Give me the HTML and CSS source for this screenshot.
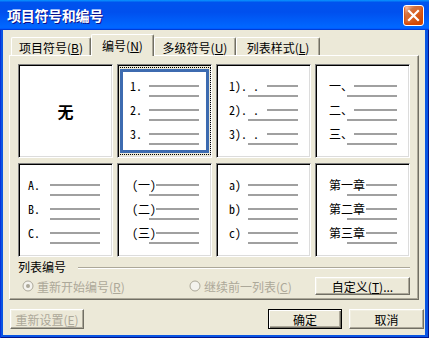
FILE: index.html
```html
<!DOCTYPE html>
<html lang="zh-CN">
<head>
    <meta charset="UTF-8">
    <title>项目符号和编号</title>
    <link rel="stylesheet" href="styles.css">
</head>
<body>
    <div class="window">
        <div class="titlebar">
            <span class="title">项目符号和编号</span>
            <button class="close" aria-label="关闭">
                <svg width="13" height="13" viewBox="0 0 13 13">
                    <path d="M2 2 L11 11 M11 2 L2 11" stroke="#fff" stroke-width="2.2" stroke-linecap="square"/>
                </svg>
            </button>
        </div>

        <div class="frame">
            <div class="dialog">
                <div class="tabs">
                    <div class="tab tab-1">项目符号(<u>B</u>)</div>
                    <div class="tab tab-2 active">编号(<u>N</u>)</div>
                    <div class="tab tab-3">多级符号(<u>U</u>)</div>
                    <div class="tab tab-4">列表样式(<u>L</u>)</div>
                </div>

                <div class="panel">
                    <div class="gallery">
                        <div class="opt opt-none">无</div>

                        <div class="opt selected o-num">
                            <div class="focus">
                                <div class="sel-in">
                                    <div class="item"><div class="head"><span class="lbl">1.</span><i class="bar"></i></div><i class="bar sub"></i></div>
                                    <div class="item"><div class="head"><span class="lbl">2.</span><i class="bar"></i></div><i class="bar sub"></i></div>
                                    <div class="item"><div class="head"><span class="lbl">3.</span><i class="bar"></i></div><i class="bar sub"></i></div>
                                </div>
                            </div>
                        </div>

                        <div class="opt o-paren-dot">
                            <div class="item"><div class="head"><span class="lbl">1). .</span><i class="bar"></i></div><i class="bar sub"></i></div>
                            <div class="item"><div class="head"><span class="lbl">2). .</span><i class="bar"></i></div><i class="bar sub"></i></div>
                            <div class="item"><div class="head"><span class="lbl">3). .</span><i class="bar"></i></div><i class="bar sub"></i></div>
                        </div>

                        <div class="opt o-cn">
                            <div class="item"><div class="head"><span class="lbl">一、</span><i class="bar"></i></div><i class="bar sub"></i></div>
                            <div class="item"><div class="head"><span class="lbl">二、</span><i class="bar"></i></div><i class="bar sub"></i></div>
                            <div class="item"><div class="head"><span class="lbl">三、</span><i class="bar"></i></div><i class="bar sub"></i></div>
                        </div>

                        <div class="opt o-alpha">
                            <div class="item"><div class="head"><span class="lbl">A.</span><i class="bar"></i></div><i class="bar sub"></i></div>
                            <div class="item"><div class="head"><span class="lbl">B.</span><i class="bar"></i></div><i class="bar sub"></i></div>
                            <div class="item"><div class="head"><span class="lbl">C.</span><i class="bar"></i></div><i class="bar sub"></i></div>
                        </div>

                        <div class="opt o-cnparen">
                            <div class="item"><div class="head"><span class="lbl">(一)</span><i class="bar"></i></div><i class="bar sub"></i></div>
                            <div class="item"><div class="head"><span class="lbl">(二)</span><i class="bar"></i></div><i class="bar sub"></i></div>
                            <div class="item"><div class="head"><span class="lbl">(三)</span><i class="bar"></i></div><i class="bar sub"></i></div>
                        </div>

                        <div class="opt o-lower">
                            <div class="item"><div class="head"><span class="lbl">a)</span><i class="bar"></i></div><i class="bar sub"></i></div>
                            <div class="item"><div class="head"><span class="lbl">b)</span><i class="bar"></i></div><i class="bar sub"></i></div>
                            <div class="item"><div class="head"><span class="lbl">c)</span><i class="bar"></i></div><i class="bar sub"></i></div>
                        </div>

                        <div class="opt o-chapter">
                            <div class="item"><div class="head"><span class="lbl">第一章</span><i class="bar"></i></div><i class="bar sub"></i></div>
                            <div class="item"><div class="head"><span class="lbl">第二章</span><i class="bar"></i></div><i class="bar sub"></i></div>
                            <div class="item"><div class="head"><span class="lbl">第三章</span><i class="bar"></i></div><i class="bar sub"></i></div>
                        </div>
                    </div>

                    <div class="group">
                        <span>列表编号</span>
                        <span class="rule"></span>
                    </div>

                    <div class="list-row">
                        <label class="radio radio-restart">
                            <svg width="12" height="12" viewBox="0 0 12 12">
                                <circle cx="6" cy="6" r="5" fill="#F4F3EE" stroke="#ACA899"/>
                                <circle cx="6" cy="6" r="2" fill="#ACA899"/>
                            </svg>
                            <span>重新开始编号(<u>R</u>)</span>
                        </label>
                        <label class="radio">
                            <svg width="12" height="12" viewBox="0 0 12 12">
                                <circle cx="6" cy="6" r="5" fill="#F4F3EE" stroke="#ACA899"/>
                            </svg>
                            <span>继续前一列表(<u>C</u>)</span>
                        </label>
                        <button class="btn btn-custom">自定义(<u>T</u>)...</button>
                    </div>
                </div>

                <div class="footer">
                    <button class="btn btn-reset" disabled>重新设置(<u>E</u>)</button>
                    <span class="spacer"></span>
                    <button class="btn btn-ok">确定</button>
                    <button class="btn btn-cancel">取消</button>
                </div>
            </div>
        </div>
    </div>
</body>
</html>
```

FILE: styles.css
```css
:root {
    --face: #ECE9D8;
    --light: #F1EFE2;
    --shadow: #ACA899;
    --dark: #716F64;
    --bar: #A0A0A0;
    --select: #3D6BB0;
}

* {
    box-sizing: border-box;
}

body {
    margin: 0;
    font-family: "Noto Sans CJK SC", "Liberation Sans", sans-serif;
    font-size: 12px;
    color: #000;
}

u {
    text-decoration: underline;
    text-underline-offset: 1px;
}

.window {
    width: 429px;
    height: 338px;
    display: flex;
    flex-direction: column;
}

/* XP style caption */
.titlebar {
    height: 30px;
    flex-shrink: 0;
    display: flex;
    align-items: center;
    justify-content: space-between;
    padding: 0 5px 0 7px;
    background: linear-gradient(180deg, #0997ff, #0053ee 8%, #0050ee 40%, #06f 88%, #06f 93%, #005bff 95%, #003dd7 96%, #003dd7);
}

.title {
    color: #fff;
    font-weight: 700;
    font-size: 14px;
    letter-spacing: -0.3px;
    text-shadow: 1px 1px #0f1089;
}

.close {
    width: 21px;
    height: 21px;
    padding: 0;
    display: flex;
    align-items: center;
    justify-content: center;
    border: 1px solid #fff;
    border-radius: 3px;
    background: radial-gradient(circle at 90% 90%, #cc4600 0%, #dc6527 55%, #cd7546 70%, #ffccb2 90%, #fff 100%);
    box-shadow: inset 0 -1px 2px 1px #da4600;
}

.frame {
    flex: 1;
    padding: 0 4px 3px 3px;
    background: #0a55e3;
    box-shadow: inset 1px 0 #0831d9, inset -1px -1px #00138c;
}

.dialog {
    height: 100%;
    background: var(--face);
    padding-top: 4px;
}

/* tabs */
.tabs {
    display: flex;
    align-items: flex-end;
    height: 21px;
    padding-left: 8px;
}

.tab {
    height: 18px;
    padding-top: 2px;
    line-height: 15px;
    text-align: center;
    white-space: nowrap;
    border: 1px solid;
    border-color: #fff var(--dark) transparent #fff;
    border-bottom: none;
    border-radius: 2px 2px 0 0;
    box-shadow: inset -1px 0 var(--shadow);
    background: var(--face);
}

.tab-1 { width: 80px; }
.tab-2 { width: 63px; }
.tab-3 { width: 82px; }
.tab-4 { width: 84px; }

.tab.active {
    height: 22px;
    padding-top: 3px;
    margin-bottom: -1px;
    position: relative;
    z-index: 1;
}

.panel {
    width: 410px;
    height: 245px;
    margin-left: 6px;
    padding: 8px 8px 4px;
    border: 1px solid;
    border-color: #fff var(--dark) var(--dark) #fff;
    box-shadow: inset -1px -1px var(--shadow);
}

/* numbering gallery */
.gallery {
    display: grid;
    grid-template-columns: repeat(4, 95px);
    grid-template-rows: repeat(2, 94px);
    gap: 5px 4px;
}

.opt {
    --pl: 13px;
    --w: 19px;
    --sub: 19px;
    background: #fff;
    border: 1px solid;
    border-color: #808080 #fff #fff #808080;
    box-shadow: inset 1px 1px #000, inset -1px -1px #dcdcdc;
    padding: 15px 12px 0 calc(var(--pl) - 1px);
    display: flex;
    flex-direction: column;
    gap: 7px;
}

.opt-none {
    align-items: center;
    justify-content: center;
    padding: 0;
    font-size: 16px;
    font-weight: 700;
}

.o-paren-dot { --pl: 13px; --w: 38px; --sub: 19px; }
.o-cn { --pl: 14px; --w: 25px; --sub: 18px; }
.o-alpha { --pl: 10px; --w: 22px; --sub: 22px; }
.o-cnparen { --pl: 15px; --w: 24px; --sub: 17px; }
.o-lower { --pl: 13px; --w: 19px; --sub: 19px; }
.o-chapter { --pl: 14px; --w: 37px; --sub: 18px; }

.opt.selected {
    background: var(--face);
    padding: 2px 0;
}

.focus {
    flex: 1;
    display: flex;
    border: 1px dotted #000;
    padding: 1px;
}

.sel-in {
    flex: 1;
    display: flex;
    flex-direction: column;
    gap: 7px;
    background: #fff;
    border: 3px solid var(--select);
    padding: 8px 7px 0;
}

.head {
    display: flex;
    align-items: center;
    height: 12px;
}

.lbl {
    width: var(--w);
    flex-shrink: 0;
    line-height: 12px;
    white-space: nowrap;
    font-family: "Noto Sans Mono CJK SC", "Liberation Mono", "Noto Sans CJK SC", monospace;
    font-size: 12px;
}

.bar {
    display: block;
    flex: 1;
    height: 2px;
    background: var(--bar);
}

.sub {
    margin-top: 3px;
    margin-left: var(--sub);
}

/* list numbering group */
.group {
    display: flex;
    align-items: center;
    gap: 12px;
    height: 14px;
    line-height: 14px;
    margin-top: 3px;
}

.rule {
    flex: 1;
    height: 2px;
    margin-top: 2px;
    border-top: 1px solid var(--shadow);
    border-bottom: 1px solid #fff;
}

.list-row {
    display: flex;
    align-items: center;
    height: 18px;
    margin-top: 3px;
}

.radio {
    display: flex;
    align-items: center;
    gap: 3px;
    color: var(--shadow);
}

.radio-restart {
    width: 167px;
    margin-left: 4px;
}

/* classic buttons */
.btn {
    font: inherit;
    color: #000;
    padding: 0;
    background: var(--face);
    border: 1px solid;
    border-color: #fff var(--dark) var(--dark) #fff;
    box-shadow: inset -1px -1px var(--shadow), inset 1px 1px var(--light);
    white-space: nowrap;
}

.btn:disabled {
    color: var(--shadow);
}

.btn-custom {
    width: 95px;
    height: 18px;
    margin-left: auto;
}

.footer {
    display: flex;
    align-items: center;
    margin-top: 9px;
    padding: 0 1px 0 7px;
}

.footer .btn {
    height: 20px;
}

.spacer {
    flex: 1;
}

.btn-reset { width: 74px; }

.btn-ok {
    width: 74px;
    border: 1px solid #000;
    box-shadow: inset 1px 1px #fff, inset -1px -1px var(--dark), inset -2px -2px var(--shadow);
}

.btn-cancel {
    width: 75px;
    margin-left: 7px;
}
```
